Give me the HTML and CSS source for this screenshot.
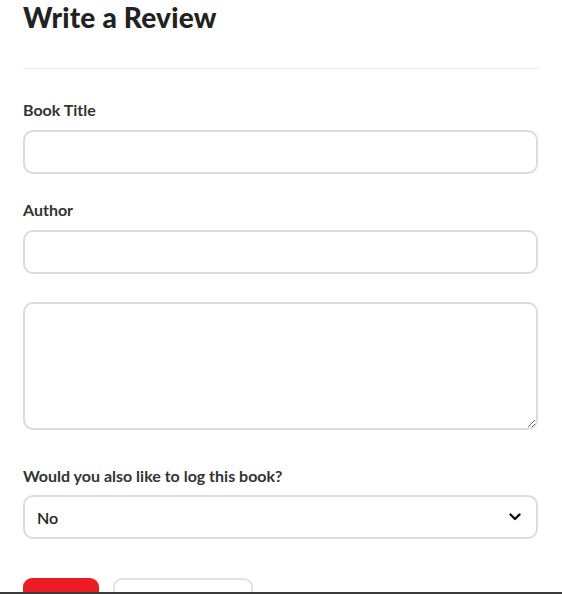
FILE: index.html
```html
<!DOCTYPE html>
<html lang="en">
<head>
    <meta charset="UTF-8">
    <meta name="viewport" content="width=device-width, initial-scale=1.0">
    <title>Write a Review</title>
    <link rel="stylesheet" href="styles.css">
</head>
<body>
    <div class="review-page">
        <h1 class="page-title">Write a Review</h1>
        <hr class="divider">

        <form class="review-form">
            <div class="field">
                <label for="bookTitle">Book Title</label>
                <input type="text" id="bookTitle">
            </div>
            <div class="field">
                <label for="author">Author</label>
                <input type="text" id="author">
            </div>
            <div class="field field-text">
                <textarea id="reviewText"></textarea>
            </div>
            <div class="field field-log">
                <label for="logBook">Would you also like to log this book?</label>
                <div class="select-wrap">
                    <select id="logBook">
                        <option>No</option>
                        <option>Yes</option>
                    </select>
                    <svg class="chevron" width="12" height="8" viewBox="0 0 12 8">
                        <path d="M1.5 1.5 L6 6 L10.5 1.5" fill="none" stroke="#111" stroke-width="2.4" stroke-linecap="round" stroke-linejoin="round"/>
                    </svg>
                </div>
            </div>
            <div class="actions">
                <button type="submit" class="btn btn-primary">Save</button>
                <button type="button" class="btn btn-secondary">Cancel</button>
            </div>
        </form>
    </div>
    <div class="bottom-bar"></div>
</body>
</html>
```

FILE: styles.css
```css
body {
    margin: 0;
    background-color: white;
    color: #333;
    font-family: Lato, "Open Sans", sans-serif;
}
.review-page {
    padding: 0 24px 0 23px;
}
.page-title {
    margin: 0;
    font-size: 28px;
    line-height: 34px;
    font-weight: 900;
    color: #222;
    letter-spacing: 0.2px;
}
.divider {
    margin: 34px 0 0;
    border: none;
    border-top: 1px solid #e8e8e8;
}
.review-form {
    padding-top: 31px;
}
.field {
    margin-bottom: 26px;
}
.field label {
    display: block;
    font-size: 16px;
    line-height: 20px;
    font-weight: 700;
    color: #333;
    margin-bottom: 10px;
}
.field input,
.field textarea,
.field select {
    display: block;
    width: 100%;
    box-sizing: border-box;
    border: 2px solid #dcdcdc;
    border-radius: 10px;
    background-color: white;
    font-family: inherit;
    font-size: 15px;
    color: #222;
    outline: none;
}
.field input {
    height: 44px;
    padding: 0 12px;
}
.field-text {
    margin-top: 28px;
    margin-bottom: 36px;
}
.field textarea {
    height: 128px;
    padding: 10px 12px;
    resize: vertical;
}
.field-log label {
    margin-bottom: 9px;
}
.select-wrap {
    position: relative;
}
.field select {
    height: 44px;
    padding: 0 12px;
    appearance: none;
    -webkit-appearance: none;
    font-size: 16px;
    font-weight: 600;
}
.chevron {
    position: absolute;
    right: 17px;
    top: 18px;
    pointer-events: none;
}
.actions {
    display: flex;
    gap: 14px;
    margin-top: 39px;
}
.btn {
    height: 44px;
    border-radius: 9px;
    font-family: inherit;
    font-size: 15px;
    font-weight: 700;
    cursor: pointer;
    box-sizing: border-box;
}
.btn-primary {
    width: 76px;
    border: none;
    background-color: #ed1c24;
    color: white;
}
.btn-secondary {
    width: 140px;
    border: 2px solid #e2e2e2;
    background-color: white;
    color: #333;
}
.bottom-bar {
    position: fixed;
    left: 0;
    right: 0;
    bottom: 0;
    height: 2px;
    background-color: #3b3b3b;
}
```
